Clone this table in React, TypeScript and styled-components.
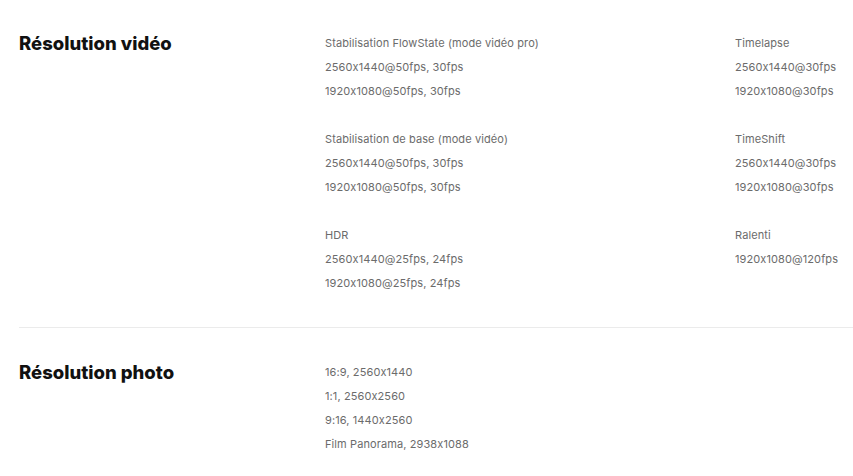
import React from "react";
import styled, { createGlobalStyle } from "styled-components";

const Global = createGlobalStyle`
  html, body { margin: 0; padding: 0; background: #fff; }
  body {
    font-family: Inter, "Noto Sans", sans-serif;
    font-feature-settings: "calt" 0;
    -webkit-font-smoothing: antialiased;
  }
`;

const Page = styled.div`
  padding: 31px 0 0 19px;
`;

const Section = styled.section<{ $divider?: boolean }>`
  display: grid;
  grid-template-columns: 306px 410px 1fr;
  padding-bottom: 32px;
  border-bottom: ${(p) => (p.$divider ? "1px solid #ebebeb" : "none")};
  margin-bottom: ${(p) => (p.$divider ? "32px" : "0")};
`;

const Title = styled.h2`
  margin: 0;
  font-size: 18.5px;
  font-weight: 800;
  line-height: 24px;
  color: #111;
`;

const Column = styled.div`
  display: flex;
  flex-direction: column;
  gap: 24px;
`;

const Group = styled.div`
  display: flex;
  flex-direction: column;
`;

const Line = styled.div`
  font-size: 11px;
  line-height: 24px;
  color: #6b6b6b;
  letter-spacing: 0.1px;
  white-space: nowrap;
`;

const video1 = [
  ["Stabilisation FlowState (mode vidéo pro)", "2560x1440@50fps, 30fps", "1920x1080@50fps, 30fps"],
  ["Stabilisation de base (mode vidéo)", "2560x1440@50fps, 30fps", "1920x1080@50fps, 30fps"],
  ["HDR", "2560x1440@25fps, 24fps", "1920x1080@25fps, 24fps"],
];
const video2 = [
  ["Timelapse", "2560x1440@30fps", "1920x1080@30fps"],
  ["TimeShift", "2560x1440@30fps", "1920x1080@30fps"],
  ["Ralenti", "1920x1080@120fps"],
];
const photo = ["16:9, 2560x1440", "1:1, 2560x2560", "9:16, 1440x2560", "Film Panorama, 2938x1088"];

const Groups = ({ data }: { data: string[][] }) => (
  <Column>
    {data.map((g, i) => (
      <Group key={i}>
        {g.map((l) => (
          <Line key={l}>{l}</Line>
        ))}
      </Group>
    ))}
  </Column>
);

export default function App() {
  return (
    <Page>
      <Global />
      <Section $divider>
        <Title>Résolution vidéo</Title>
        <Groups data={video1} />
        <Groups data={video2} />
      </Section>
      <Section>
        <Title>Résolution photo</Title>
        <Groups data={[photo]} />
      </Section>
    </Page>
  );
}
